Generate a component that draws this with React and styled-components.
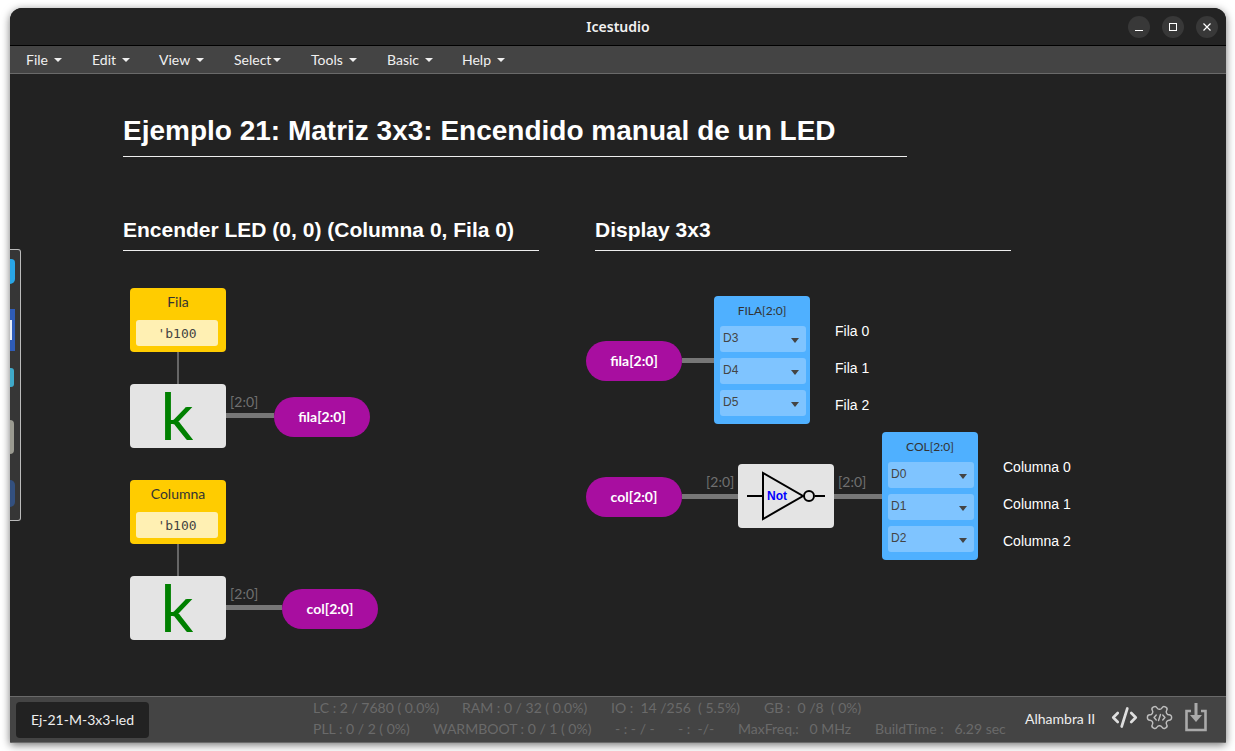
import React from "react";
import styled, { createGlobalStyle } from "styled-components";
import { CodeXml } from "lucide-react";

const GlobalStyle = createGlobalStyle`
    html, body {
        margin: 0;
        padding: 0;
        background: #fff;
        overflow: hidden;
    }
    #root {
        height: 751px;
    }
`;

const Desktop = styled.div`
    height: 751px;
    box-sizing: border-box;
    padding: 8px 9px 8px 10px;
    font-family: "Lato", "Liberation Sans", sans-serif;
`;

const Window = styled.div`
    position: relative;
    height: 100%;
    display: flex;
    flex-direction: column;
    border-radius: 12px 12px 2px 2px;
    overflow: hidden;
    background: #222;
    box-shadow: 0 2px 9px rgba(0, 0, 0, 0.55);
`;

const TitleBar = styled.header`
    height: 37px;
    flex: none;
    display: flex;
    align-items: center;
    justify-content: flex-end;
    gap: 12px;
    padding-right: 8px;
    position: relative;
    background: #232323;
    border-bottom: 1px solid #000;
`;

const WindowTitle = styled.div`
    position: absolute;
    left: 0;
    right: 0;
    text-align: center;
    color: #f2f2f2;
    font: 600 14px "Noto Sans", sans-serif;
`;

const WinButton = styled.button`
    width: 22px;
    height: 22px;
    padding: 0;
    border: 0;
    border-radius: 50%;
    background: #383838;
    display: flex;
    align-items: center;
    justify-content: center;
    position: relative;
    svg {
        display: block;
    }
`;

const MenuBar = styled.nav`
    height: 27px;
    flex: none;
    display: flex;
    align-items: center;
    padding-left: 16px;
    background: #444;
    border-bottom: 1px solid #6a6a6a;
`;

const MenuItem = styled.div`
    width: ${(p) => p.$width}px;
    display: flex;
    align-items: center;
    color: #f0f0f0;
    font-size: 14px;
    &::after {
        content: "";
        margin-left: ${(p) => p.$caretGap ?? 6}px;
        margin-top: 1px;
        border-top: 4px solid #f0f0f0;
        border-left: 4px solid transparent;
        border-right: 4px solid transparent;
    }
`;

const Canvas = styled.main`
    position: relative;
    flex: 1;
    background: #222;
`;

/* canvas offsets are window based: x - 10, y - 74 */
const Placed = styled.div`
    position: absolute;
    left: ${(p) => p.$x - 10}px;
    top: ${(p) => p.$y - 74}px;
`;

const Heading = styled(Placed)`
    width: ${(p) => p.$width}px;
    box-sizing: border-box;
    height: ${(p) => p.$height}px;
    border-bottom: 1px solid #eee;
    color: #fff;
    font-family: "Liberation Sans", Arial, sans-serif;
    font-weight: bold;
    font-size: ${(p) => p.$size}px;
    line-height: ${(p) => p.$size + 4}px;
    white-space: nowrap;
`;

const Wire = styled(Placed)`
    width: ${(p) => p.$w}px;
    height: ${(p) => p.$h}px;
    background: ${(p) => (p.$thin ? "#666" : "#777")};
`;

const WireLabel = styled(Placed)`
    color: #707070;
    font-size: 14px;
    line-height: 16px;
`;

const Constant = styled(Placed)`
    width: 96px;
    height: 64px;
    box-sizing: border-box;
    padding: 5px 8px 6px 6px;
    border-radius: 4px;
    background: #fc0;
    display: flex;
    flex-direction: column;
    justify-content: space-between;
    align-items: center;
    color: #333;
    font-size: 14px;
    line-height: 17px;
`;

const ConstantName = styled.div`
    margin-left: 2px;
`;

const ConstantValue = styled.div`
    width: 100%;
    height: 26px;
    border-radius: 3px;
    background: #fff0b3;
    display: flex;
    align-items: center;
    justify-content: center;
    font: 13px "DejaVu Sans Mono", "Liberation Mono", monospace;
    color: #444;
`;

const GateBlock = styled(Placed)`
    width: 96px;
    height: 64px;
    border-radius: 4px;
    background: #e4e4e4;
    display: flex;
    align-items: center;
    justify-content: center;
`;

const KGlyph = styled.span`
    color: #008000;
    font-size: 65px;
    line-height: 64px;
    margin-top: -2px;
    margin-left: -2px;
    font-family: "Lato", sans-serif;
`;

const Pill = styled(Placed)`
    width: 96px;
    height: 40px;
    box-sizing: border-box;
    padding-bottom: 2px;
    border-radius: 20px;
    background: #a80ea0;
    color: #fff;
    font-size: 14px;
    font-weight: bold;
    display: flex;
    align-items: center;
    justify-content: center;
`;

const Output = styled(Placed)`
    width: 96px;
    height: 128px;
    box-sizing: border-box;
    padding: 6px 4px 8px 6px;
    border-radius: 4px;
    background: #4fb0ff;
    display: flex;
    flex-direction: column;
    gap: 6px;
`;

const OutputTitle = styled.div`
    height: 18px;
    padding-right: 2px;
    text-align: center;
    color: #333;
    font-size: 12px;
    line-height: 18px;
`;

const PinSelect = styled.div`
    height: 26px;
    border-radius: 3px;
    background: #7fc4ff;
    color: #444;
    font: 12px "Liberation Sans", Arial, sans-serif;
    line-height: 24px;
    padding-left: 3px;
    position: relative;
    &::after {
        content: "";
        position: absolute;
        right: 7px;
        top: 12px;
        border-top: 5px solid #444;
        border-left: 4px solid transparent;
        border-right: 4px solid transparent;
    }
`;

const PinLabel = styled(Placed)`
    color: #fff;
    font: 14px "Liberation Sans", Arial, sans-serif;
    line-height: 16px;
`;

const Dock = styled.aside`
    position: absolute;
    left: 0;
    top: 241px;
    width: 11px;
    height: 272px;
    box-sizing: border-box;
    padding-top: 9px;
    display: flex;
    flex-direction: column;
    align-items: flex-start;
    background: #363636;
    border: 1px solid #bbb;
    border-left: 0;
    border-radius: 0 3px 3px 0;
`;

const DockIcon = styled.div`
    height: ${(p) => p.$h}px;
    width: ${(p) => p.$w}px;
    margin-bottom: ${(p) => p.$after}px;
    background: ${(p) => p.$color};
    border-radius: ${(p) => p.$radius || "0"};
    display: flex;
    align-items: center;
`;

const DockGlint = styled.div`
    width: 2px;
    height: 20px;
    background: #e6ecf8;
`;

const Footer = styled.footer`
    height: 47px;
    flex: none;
    box-sizing: border-box;
    display: flex;
    align-items: center;
    padding-left: 6px;
    background: #444;
    border-top: 1px solid #6a6a6a;
    border-bottom: 1px solid #6a6a6a;
`;

const ProjectName = styled.div`
    width: 133px;
    height: 36px;
    flex: none;
    border-radius: 4px;
    background: #222;
    color: #eee;
    font-size: 14px;
    display: flex;
    align-items: center;
    justify-content: center;
`;

const Stats = styled.div`
    margin-left: 164px;
    margin-top: -4px;
    flex: none;
    width: 712px;
    display: flex;
    flex-direction: column;
    gap: 2px;
`;

const StatRow = styled.div`
    display: flex;
    height: 19px;
    align-items: center;
`;

const Stat = styled.span`
    width: ${(p) => p.$width}px;
    flex: none;
    color: #6a6a6a;
    font-size: 14px;
    white-space: pre;
`;

const Board = styled.div`
    margin-top: -2px;
    color: #eee;
    font-size: 14px;
    white-space: nowrap;
`;

const ToolIcons = styled.div`
    margin-left: 16px;
    margin-top: -4px;
    display: flex;
    align-items: center;
    color: #bdbdbd;
`;

const ToolIcon = styled.div`
    width: ${(p) => p.$width}px;
    display: flex;
    color: ${(p) => p.$color || "inherit"};
`;

const menus = [
    ["File", 66],
    ["Edit", 67],
    ["View", 75],
    ["Select", 77, 2],
    ["Tools", 76],
    ["Basic", 75],
    ["Help", 60],
];

const Select3 = ({ x, y, title, pins }) => (
    <Output $x={x} $y={y}>
        <OutputTitle>{title}</OutputTitle>
        {pins.map((pin) => (
            <PinSelect key={pin}>{pin}</PinSelect>
        ))}
    </Output>
);

const NotGate = () => (
    <svg width="96" height="64" viewBox="0 0 96 64">
        <path d="M9 32H25M77 32H87" stroke="#000" strokeWidth="2" fill="none" />
        <path d="M25 9V55L65 32Z" stroke="#000" strokeWidth="2" fill="none" />
        <circle cx="71" cy="32" r="5" stroke="#000" strokeWidth="2" fill="none" />
        <text x="29" y="36" fill="#00f" fontFamily="Liberation Sans" fontWeight="bold" fontSize="12">Not</text>
    </svg>
);

const GearCode = () => (
    <svg width="29" height="29" viewBox="0 0 24 24" fill="none" stroke="currentColor" strokeWidth="1.2" strokeLinecap="round" strokeLinejoin="round">
        <path transform="rotate(90 12 12)" d="M12.22 2h-.44a2 2 0 0 0-2 2v.18a2 2 0 0 1-1 1.73l-.43.25a2 2 0 0 1-2 0l-.15-.08a2 2 0 0 0-2.73.73l-.22.38a2 2 0 0 0 .73 2.73l.15.1a2 2 0 0 1 1 1.72v.51a2 2 0 0 1-1 1.74l-.15.09a2 2 0 0 0-.73 2.73l.22.38a2 2 0 0 0 2.73.73l.15-.08a2 2 0 0 1 2 0l.43.25a2 2 0 0 1 1 1.73V20a2 2 0 0 0 2 2h.44a2 2 0 0 0 2-2v-.18a2 2 0 0 1 1-1.73l.43-.25a2 2 0 0 1 2 0l.15.08a2 2 0 0 0 2.73-.73l.22-.39a2 2 0 0 0-.73-2.73l-.15-.08a2 2 0 0 1-1-1.74v-.5a2 2 0 0 1 1-1.74l.15-.09a2 2 0 0 0 .73-2.73l-.22-.38a2 2 0 0 0-2.73-.73l-.15.08a2 2 0 0 1-2 0l-.43-.25a2 2 0 0 1-1-1.73V4a2 2 0 0 0-2-2z" />
        <path d="M9.3 10L7.5 12l1.8 2M14.7 10l1.8 2-1.8 2M12.8 9.5l-1.6 5" />
    </svg>
);

export default function App() {
    return (
        <Desktop>
            <GlobalStyle />
            <Window>
                <TitleBar>
                    <WindowTitle>Icestudio</WindowTitle>
                    <WinButton>
                        <svg width="10" height="10" viewBox="0 0 10 10"><path d="M1 8.5H9" stroke="#fff" strokeWidth="1" /></svg>
                    </WinButton>
                    <WinButton>
                        <svg width="10" height="10" viewBox="0 0 10 10"><rect x="1.5" y="1.5" width="7" height="7" stroke="#fff" strokeWidth="1" fill="none" /></svg>
                    </WinButton>
                    <WinButton>
                        <svg width="10" height="10" viewBox="0 0 10 10"><path d="M1.5 1.5L8.5 8.5M8.5 1.5L1.5 8.5" stroke="#fff" strokeWidth="1.2" /></svg>
                    </WinButton>
                </TitleBar>
                <MenuBar>
                    {menus.map(([name, width, gap]) => (
                        <MenuItem key={name} $width={width} $caretGap={gap}>{name}</MenuItem>
                    ))}
                </MenuBar>
                <Canvas>
                    <Heading $x={123} $y={115} $width={784} $height={42} $size={28}>Ejemplo 21: Matriz 3x3: Encendido manual de un LED</Heading>
                    <Heading $x={123} $y={217} $width={416} $height={34} $size={21}>Encender LED (0, 0) (Columna 0, Fila 0)</Heading>
                    <Heading $x={595} $y={217} $width={416} $height={34} $size={21}>Display 3x3</Heading>

                    <Wire $thin $x={177} $y={352} $w={2} $h={32} />
                    <Constant $x={130} $y={288}>
                        <ConstantName>Fila</ConstantName>
                        <ConstantValue>'b100</ConstantValue>
                    </Constant>
                    <GateBlock $x={130} $y={384}><KGlyph>k</KGlyph></GateBlock>
                    <Wire $x={226} $y={413} $w={48} $h={5} />
                    <WireLabel $x={230} $y={394}>[2:0]</WireLabel>
                    <Pill $x={274} $y={397}>fila[2:0]</Pill>

                    <Wire $thin $x={177} $y={544} $w={2} $h={32} />
                    <Constant $x={130} $y={480}>
                        <ConstantName>Columna</ConstantName>
                        <ConstantValue>'b100</ConstantValue>
                    </Constant>
                    <GateBlock $x={130} $y={576}><KGlyph>k</KGlyph></GateBlock>
                    <Wire $x={226} $y={605} $w={56} $h={5} />
                    <WireLabel $x={230} $y={586}>[2:0]</WireLabel>
                    <Pill $x={282} $y={589}>col[2:0]</Pill>

                    <Pill $x={586} $y={341}>fila[2:0]</Pill>
                    <Wire $x={682} $y={358} $w={32} $h={5} />
                    <Select3 x={714} y={296} title="FILA[2:0]" pins={["D3", "D4", "D5"]} />
                    <PinLabel $x={835} $y={323}>Fila 0</PinLabel>
                    <PinLabel $x={835} $y={360}>Fila 1</PinLabel>
                    <PinLabel $x={835} $y={397}>Fila 2</PinLabel>

                    <Pill $x={586} $y={477}>col[2:0]</Pill>
                    <Wire $x={682} $y={494} $w={56} $h={5} />
                    <WireLabel $x={706} $y={474}>[2:0]</WireLabel>
                    <GateBlock $x={738} $y={464}><NotGate /></GateBlock>
                    <Wire $x={834} $y={494} $w={48} $h={5} />
                    <WireLabel $x={838} $y={474}>[2:0]</WireLabel>
                    <Select3 x={882} y={432} title="COL[2:0]" pins={["D0", "D1", "D2"]} />
                    <PinLabel $x={1003} $y={459}>Columna 0</PinLabel>
                    <PinLabel $x={1003} $y={496}>Columna 1</PinLabel>
                    <PinLabel $x={1003} $y={533}>Columna 2</PinLabel>
                </Canvas>
                <Footer>
                    <ProjectName>Ej-21-M-3x3-led</ProjectName>
                    <Stats>
                        <StatRow>
                            <Stat $width={149}>LC : 2 / 7680 ( 0.0%)</Stat>
                            <Stat $width={149}>RAM : 0 / 32 ( 0.0%)</Stat>
                            <Stat $width={153}>IO :  14 /256  ( 5.5%)</Stat>
                            <Stat $width={120}>GB :  0 /8  ( 0%)</Stat>
                        </StatRow>
                        <StatRow>
                            <Stat $width={120}>PLL : 0 / 2 ( 0%)</Stat>
                            <Stat $width={182}>WARMBOOT : 0 / 1 ( 0%)</Stat>
                            <Stat $width={63}>- : - / -</Stat>
                            <Stat $width={60}>- :  -/-</Stat>
                            <Stat $width={137}>MaxFreq.:   0 MHz</Stat>
                            <Stat $width={140}>BuildTime :   6.29 sec</Stat>
                        </StatRow>
                    </Stats>
                    <Board>Alhambra II</Board>
                    <ToolIcons>
                        <ToolIcon $width={34} $color="#dedede"><CodeXml size={27} strokeWidth={2.4} /></ToolIcon>
                        <ToolIcon $width={40}><GearCode /></ToolIcon>
                        <ToolIcon $width={24}>
                            <svg width="22" height="29" viewBox="0 0 22 29">
                                <path d="M6 8H1.5V27H20.5V8H16" stroke="#aaa" strokeWidth="2.6" fill="none" />
                                <path d="M11 0V14" stroke="#aaa" strokeWidth="3" fill="none" />
                                <path d="M5 12L11 19L17 12Z" fill="#aaa" />
                            </svg>
                        </ToolIcon>
                    </ToolIcons>
                </Footer>
                <Dock>
                    <DockIcon $w={5} $h={25} $after={25} $color="#29a6e6" $radius="0 6px 8px 0" />
                    <DockIcon $w={5} $h={42} $after={17} $color="#2f5cb8"><DockGlint /></DockIcon>
                    <DockIcon $w={4} $h={19} $after={33} $color="#3fa9c9" $radius="0 3px 3px 0" />
                    <DockIcon $w={4} $h={34} $after={26} $color="#9a9a90" $radius="0 4px 4px 0" />
                    <DockIcon $w={5} $h={27} $after={0} $color="#33507f" $radius="0 8px 8px 0" />
                </Dock>
            </Window>
        </Desktop>
    );
}
